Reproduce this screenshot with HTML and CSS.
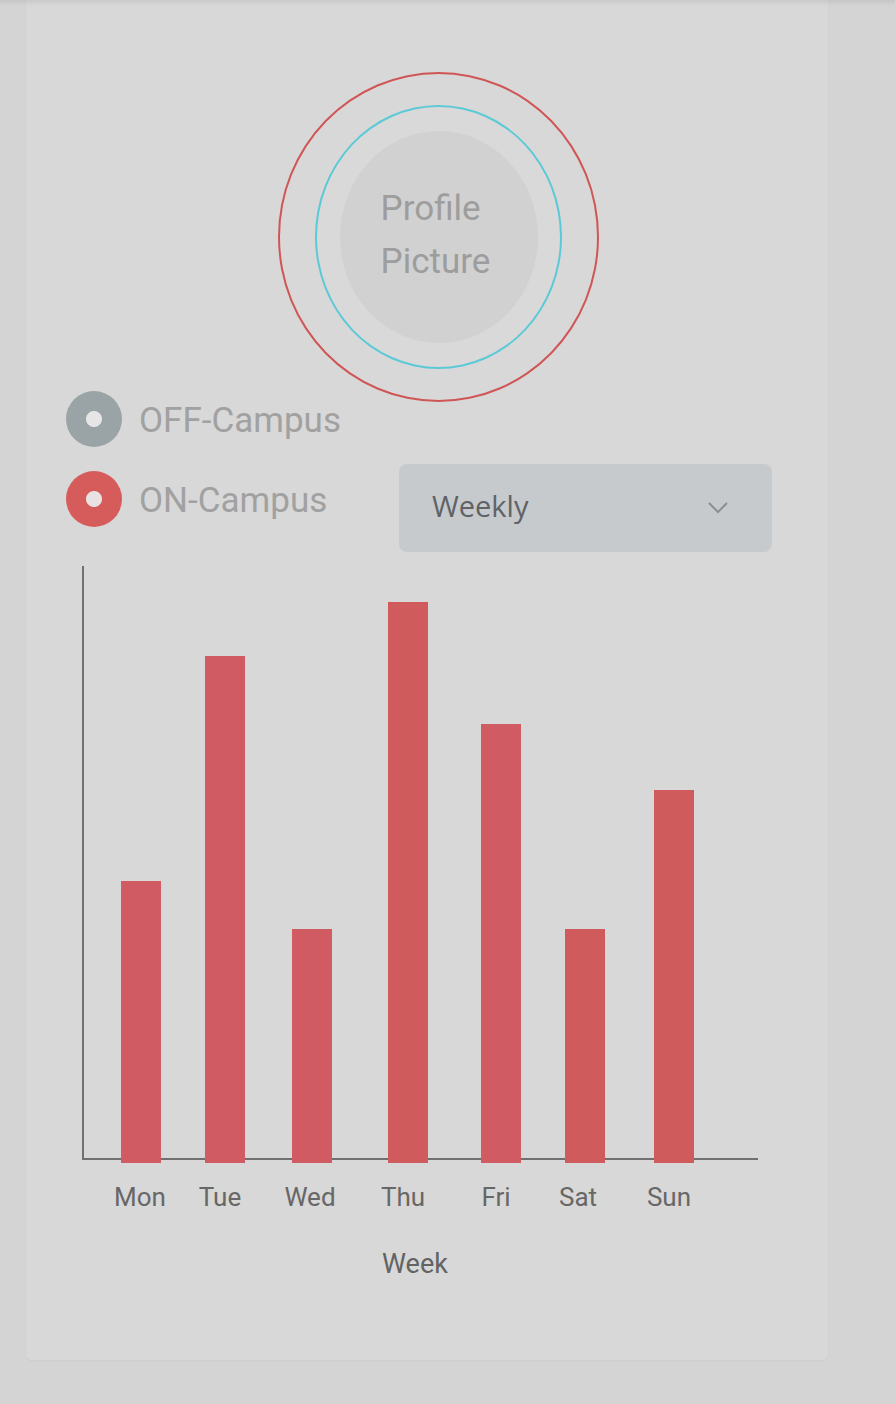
FILE: index.html
```html
<!DOCTYPE html>
<html>
<head>
<meta charset="utf-8">
<link rel="stylesheet" href="styles.css">
</head>
<body>
<div class="card">
  <div class="profile">
    <div class="ring-outer">
      <div class="ring-inner">
        <div class="avatar">
          <div class="avatar-text">Profile<br>Picture</div>
        </div>
      </div>
    </div>
  </div>

  <div class="legend">
    <div class="legend-row">
      <div class="legend-item">
        <span class="dot dot-off"></span>
        <span class="legend-label">OFF-Campus</span>
      </div>
    </div>
    <div class="legend-row legend-row-2">
      <div class="legend-item legend-item-on">
        <span class="dot dot-on"></span>
        <span class="legend-label">ON-Campus</span>
      </div>
      <div class="select">
        <span class="select-text">Weekly</span>
        <svg class="chevron" width="22" height="13" viewBox="0 0 22 13"><polyline points="2,2 11,11 20,2" fill="none" stroke="#8c8f92" stroke-width="2"/></svg>
      </div>
    </div>
  </div>

  <div class="chart">
    <div class="plot">
      <div class="bar bar-a" style="height:282px"></div>
      <div class="bar bar-a" style="height:507px"></div>
      <div class="bar bar-a" style="height:234px"></div>
      <div class="bar bar-b" style="height:561px"></div>
      <div class="bar bar-a" style="height:439px"></div>
      <div class="bar bar-b" style="height:234px"></div>
      <div class="bar bar-b" style="height:373px"></div>
    </div>
    <div class="labels">
      <span class="label">Mon</span>
      <span class="label">Tue</span>
      <span class="label">Wed</span>
      <span class="label">Thu</span>
      <span class="label">Fri</span>
      <span class="label">Sat</span>
      <span class="label">Sun</span>
    </div>
    <div class="axis-title">Week</div>
  </div>
</div>
</body>
</html>
```

FILE: styles.css
```css
html, body {
  margin: 0;
  padding: 0;
}
body {
  background: linear-gradient(#c6c6c6 0, #d4d4d4 6px);
  width: 895px;
  height: 1404px;
  overflow: hidden;
  font-family: Roboto, "Noto Sans", sans-serif;
}
.card {
  margin-left: 26px;
  width: 802px;
  height: 1360px;
  background: linear-gradient(#c9c9c9 0, #d8d8d8 6px);
  border-radius: 0 0 6px 6px;
  box-shadow: 0 1px 2px rgba(0,0,0,0.04);
  display: flex;
  flex-direction: column;
}
.profile {
  margin-top: 72px;
  margin-left: 252px;
}
.ring-outer {
  box-sizing: border-box;
  width: 321px;
  height: 330px;
  border: 2px solid #d05656;
  border-radius: 50%;
  display: flex;
  align-items: center;
  justify-content: center;
}
.ring-inner {
  box-sizing: border-box;
  width: 247px;
  height: 264px;
  border: 2px solid #5cc9d6;
  border-radius: 50%;
  background: #d9d9d9;
  display: flex;
  align-items: center;
  justify-content: center;
}
.avatar {
  width: 198px;
  height: 212px;
  border-radius: 50%;
  background: #d1d1d1;
  display: flex;
  align-items: center;
  justify-content: center;
}
.avatar-text {
  font-size: 35px;
  line-height: 53px;
  color: #9d9d9d;
  padding-bottom: 4px;
  padding-right: 6px;
}
.legend {
  margin-top: -11px;
  padding-left: 40px;
  display: flex;
  flex-direction: column;
}
.legend-row {
  display: flex;
  align-items: flex-start;
}
.legend-row-2 {
  margin-top: 17px;
}
.legend-item {
  display: flex;
  align-items: center;
  gap: 17px;
  height: 56px;
}
.legend-item-on {
  width: 333px;
  margin-top: 7px;
}
.legend-label {
  font-size: 35px;
  line-height: 52px;
  padding-top: 4px;
  color: #a1a1a1;
}
.dot {
  width: 56px;
  height: 56px;
  border-radius: 50%;
  flex: none;
}
.dot-off {
  background: radial-gradient(circle, #e6e6e6 0, #e6e6e6 7.5px, #9aa3a6 8.5px);
}
.dot-on {
  background: radial-gradient(circle, #e8e2e2 0, #e8e2e2 7.5px, #d65c5c 8.5px);
}
.select {
  box-sizing: border-box;
  width: 373px;
  height: 88px;
  background: #c7cacd;
  border-radius: 8px;
  display: flex;
  align-items: center;
  justify-content: space-between;
  padding: 0 43px 0 33px;
}
.select-text {
  font-family: "Open Sans", sans-serif;
  font-size: 29px;
  line-height: 29px;
  color: #5f6367;
  padding-bottom: 6px;
}
.chevron {
  display: block;
  margin-top: -1px;
}
.chart {
  margin-top: 14px;
  margin-left: 56px;
  width: 676px;
}
.plot {
  box-sizing: border-box;
  height: 594px;
  border-left: 2px solid #707070;
  border-bottom: 2px solid #707070;
  display: flex;
  align-items: flex-end;
  padding-left: 37px;
}
.bar {
  width: 40px;
  margin-bottom: -5px;
  flex: none;
}
.bar:nth-child(2) { margin-left: 44px; }
.bar:nth-child(3) { margin-left: 47px; }
.bar:nth-child(4) { margin-left: 56px; }
.bar:nth-child(5) { margin-left: 53px; }
.bar:nth-child(6) { margin-left: 44px; }
.bar:nth-child(7) { margin-left: 49px; }
.bar-a {
  background: #d15b63;
}
.bar-b {
  background: #d05b5d;
}
.labels {
  display: flex;
  margin-top: 22px;
  padding-left: 18px;
}
.label {
  width: 80px;
  flex: none;
  text-align: center;
  font-size: 26px;
  line-height: 31px;
  color: #676767;
}
.label:nth-child(2) { margin-left: 0; }
.label:nth-child(3) { margin-left: 10px; }
.label:nth-child(4) { margin-left: 13px; }
.label:nth-child(5) { margin-left: 13px; }
.label:nth-child(6) { margin-left: 2px; }
.label:nth-child(7) { margin-left: 11px; }
.axis-title {
  margin-top: 36px;
  text-align: center;
  font-size: 27px;
  line-height: 31px;
  color: #636363;
  margin-right: 10px;
}
```
